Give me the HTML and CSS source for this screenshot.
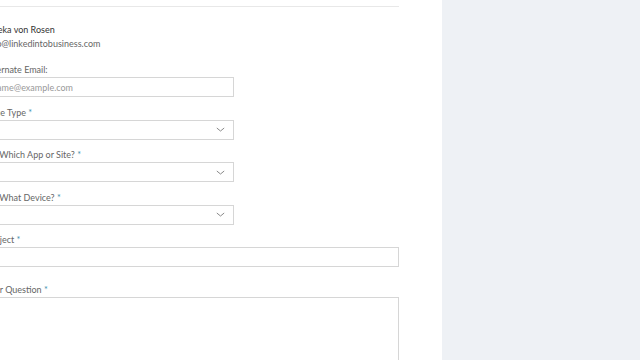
FILE: index.html
```html
<!DOCTYPE html>
<html>
<head>
<meta charset="utf-8">
<link rel="stylesheet" href="styles.css">
</head>
<body>
<div class="page">
  <main class="main">
    <div class="form">
      <div class="topline"></div>
      <div class="user">
        <div class="name">Viveka von Rosen</div>
        <div class="mail">vivp@linkedintobusiness.com</div>
      </div>
      <div class="field first">
        <label class="label">Alternate Email:</label>
        <div class="box short"><span class="ph">name@example.com</span></div>
      </div>
      <div class="field">
        <label class="label">Issue Type <span class="req">*</span></label>
        <div class="box short"><span></span><svg class="chev" width="9" height="5" viewBox="0 0 9 5"><path d="M0.8 1 L4.5 4 L8.2 1" fill="none" stroke="#888" stroke-width="1"/></svg></div>
      </div>
      <div class="field">
        <label class="label">On Which App or Site? <span class="req">*</span></label>
        <div class="box short"><span></span><svg class="chev" width="9" height="5" viewBox="0 0 9 5"><path d="M0.8 1 L4.5 4 L8.2 1" fill="none" stroke="#888" stroke-width="1"/></svg></div>
      </div>
      <div class="field">
        <label class="label">On What Device? <span class="req">*</span></label>
        <div class="box short"><span></span><svg class="chev" width="9" height="5" viewBox="0 0 9 5"><path d="M0.8 1 L4.5 4 L8.2 1" fill="none" stroke="#888" stroke-width="1"/></svg></div>
      </div>
      <div class="field">
        <label class="label">Subject <span class="req">*</span></label>
        <div class="box wide"></div>
      </div>
      <div class="field q">
        <label class="label">Your Question <span class="req">*</span></label>
        <div class="box wide area"></div>
      </div>
    </div>
  </main>
  <aside class="side"></aside>
</div>
</body>
</html>
```
FILE: styles.css
```css
html, body { margin: 0; padding: 0; }
body { font-family: Lato, "Open Sans", sans-serif; background: #fff; width: 640px; height: 360px; overflow: hidden; }
.page { display: flex; height: 360px; }
.main { width: 442px; flex: none; background: #fff; overflow: hidden; }
.side { flex: 1; background: #eef1f5; }
.form { margin-left: -15px; width: 414px; }
.topline { height: 6px; border-bottom: 1px solid #e8e8e8; }
.user { padding-top: 16px; }
.name { font-size: 9px; color: #333; line-height: 13px; }
.mail { font-size: 9px; color: #666; line-height: 13px; margin-top: 1px; }
.field { margin-top: 9.5px; }
.field.first { margin-top: 14px; }
.label { display: block; font-size: 9px; color: #666; line-height: 11px; margin-bottom: 2px; }
.req { color: #3f8fae; }
.box { height: 18px; border: 1px solid #d6d6d6; display: flex; align-items: center; justify-content: space-between; padding: 0 6px; }
.short { width: 235px; }
.wide { width: 400px; }
.ph { font-size: 9px; color: #999; }
.chev { margin-right: 2px; }
.q { margin-top: 16.5px; }
.area { height: 80px; }
```
